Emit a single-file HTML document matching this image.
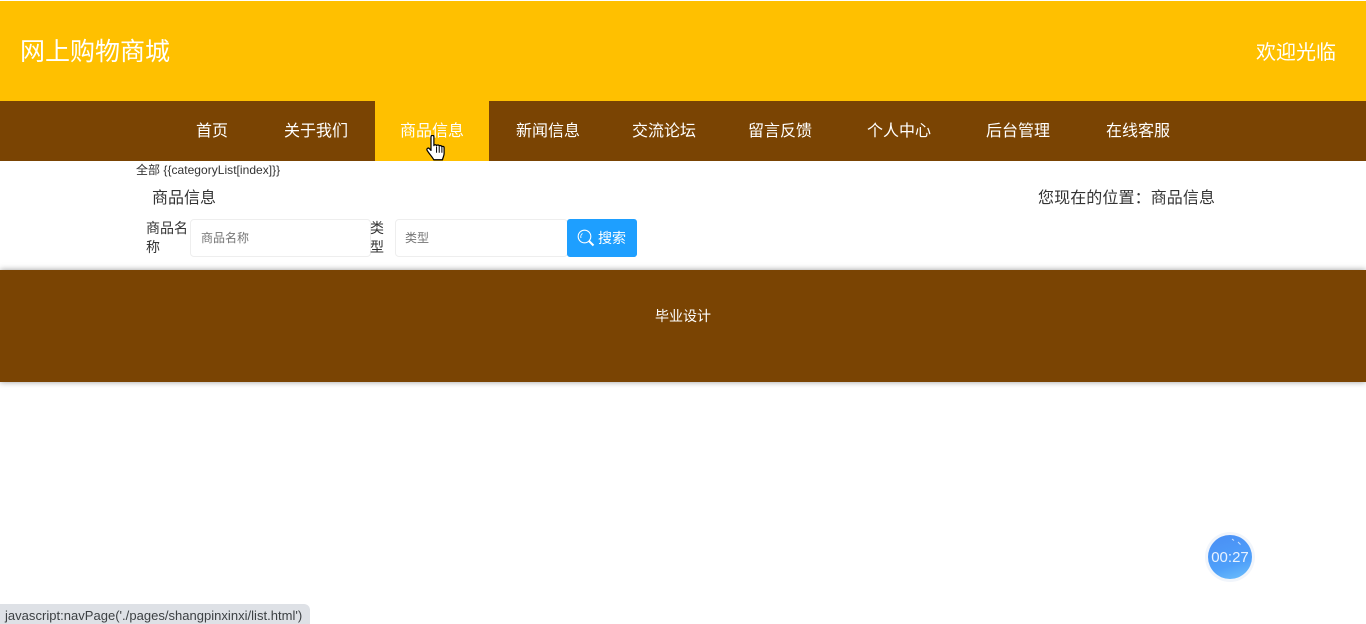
<!DOCTYPE html>
<html lang="zh"><head><meta charset="utf-8"><title>商品信息</title>
<style>
*{box-sizing:border-box}
html,body{margin:0;padding:0;width:1366px;height:624px;overflow:hidden;background:#fff;font-family:"Liberation Sans","Noto Sans CJK SC",sans-serif;color:#333}
.a{position:absolute;white-space:nowrap;line-height:1}
#head{position:absolute;left:0;top:1px;width:1366px;height:100px;background:#ffc000}
#nav{position:absolute;left:0;top:101px;width:1366px;height:60px;background:#7a4403}
#act{position:absolute;left:375px;top:101px;width:114px;height:60px;background:#ffc000}
.n{position:absolute;top:123px;font-size:16px;line-height:18px;color:#fff;white-space:nowrap}
.box{position:absolute;top:219px;height:38px;background:#fff;border:1px solid #eee;border-radius:4px;font-size:12px;line-height:36px;color:#757575}
#foot{position:absolute;left:0;top:270px;width:1366px;height:112px;background:#7a4403;box-shadow:0 0 6px rgba(0,0,0,.4)}
</style></head><body>
<div id="head"></div>
<div class="a" style="left:20px;top:40px;font-size:25px;color:#fff">网上购物商城</div>
<div class="a" style="left:1256px;top:42px;font-size:20px;color:#fff;margin-top:1px">欢迎光临</div>
<div id="nav"></div><div id="act"></div>
<div class="n" style="left:196px">首页</div>
<div class="n" style="left:284px">关于我们</div>
<div class="n" style="left:400px">商品信息</div>
<div class="n" style="left:516px">新闻信息</div>
<div class="n" style="left:632px">交流论坛</div>
<div class="n" style="left:748px">留言反馈</div>
<div class="n" style="left:867px">个人中心</div>
<div class="n" style="left:986px">后台管理</div>
<div class="n" style="left:1106px">在线客服</div>
<svg style="position:absolute;left:426px;top:135px" width="20" height="26" viewBox="0.500 1 18 22" preserveAspectRatio="none"><path d="M5 2.500c0-1.600 2.600-1.600 2.600 0V10c0-1 2.400-1 2.400.2 0-1 2.400-1 2.400.3 .2-.9 2.400-.7 2.400.6 0-.8 2-.6 2 .6v5c0 2-1 3-1.500 5.300H7.500C6.500 20 3.500 17 1.500 14c-.8-1.500 1-2.500 2-1.500L5 14Z" fill="#fff" stroke="#000" stroke-width="1.100" stroke-linejoin="round"/><path d="M10 11v5M12.400 11v5M14.800 11.500v4.500" stroke="#000" stroke-width=".9" fill="none"/></svg>
<div class="a" style="left:136px;top:163px;font-size:12px;line-height:14px;letter-spacing:.03px">全部 {{categoryList[index]}}</div>
<div class="a" style="left:152px;top:190px;font-size:16px;line-height:18px">商品信息</div>
<div class="a" style="left:1038px;top:190px;font-size:16px;line-height:18px;letter-spacing:.1px">您现在的位置：商品信息</div>
<div class="a" style="left:146px;top:219px;width:44px;font-size:14px;line-height:19px;white-space:normal">商品名称</div>
<div class="box" style="left:190px;width:181px;padding-left:10px">商品名称</div>
<div class="a" style="left:370px;top:219px;width:16px;font-size:14px;line-height:19px;white-space:normal">类型</div>
<div class="box" style="left:395px;width:173px;padding-left:9px">类型</div>
<div style="position:absolute;left:567px;top:219px;width:70px;height:38px;background:#1e9fff;border-radius:3px"></div>
<svg style="position:absolute;left:577px;top:229px" width="18" height="18" viewBox="0 0 18 18" fill="none" stroke="#fff"><circle cx="7.500" cy="7.500" r="6.300" stroke-width="1.100"/><path d="M12 12l4.500 4.500" stroke-width="2"/><path d="M4 9a3.800 3.800 0 0 1 1.500-4.500" stroke-width=".9"/></svg>
<div class="a" style="left:598px;top:230px;font-size:14px;line-height:16px;color:#fff">搜索</div>
<div id="foot"></div>
<div class="a" style="left:655px;top:308px;font-size:14px;line-height:16px;color:#fff">毕业设计</div>
<svg style="position:absolute;left:1203px;top:531px" width="54" height="54" viewBox="0 0 54 54"><defs><linearGradient id="g" x1="0.300" y1="0" x2="0.600" y2="1"><stop offset="0" stop-color="#4a90f5"/><stop offset=".7" stop-color="#4fa0fa"/><stop offset="1" stop-color="#66b8fb"/></linearGradient></defs><circle cx="27" cy="26" r="25" fill="#f1f5fb"/><circle cx="27" cy="26" r="22" fill="url(#g)"/><path d="M29 8l2 1.500M35 11l2.500 2.500" stroke="#cfe4ff" fill="none"/></svg>
<div class="a" style="left:1205px;top:549px;width:50px;text-align:center;font-size:15px;line-height:17px;color:#e9f3ff">00:27</div>
<div style="position:absolute;left:0;top:604px;width:310px;height:20px;background:#dee1e6;border-top-right-radius:6px"></div>
<div class="a" style="left:5px;top:608px;font-size:13px;line-height:15px;letter-spacing:.02px;color:#3c4043">javascript:navPage('./pages/shangpinxinxi/list.html')</div>
</body></html>
